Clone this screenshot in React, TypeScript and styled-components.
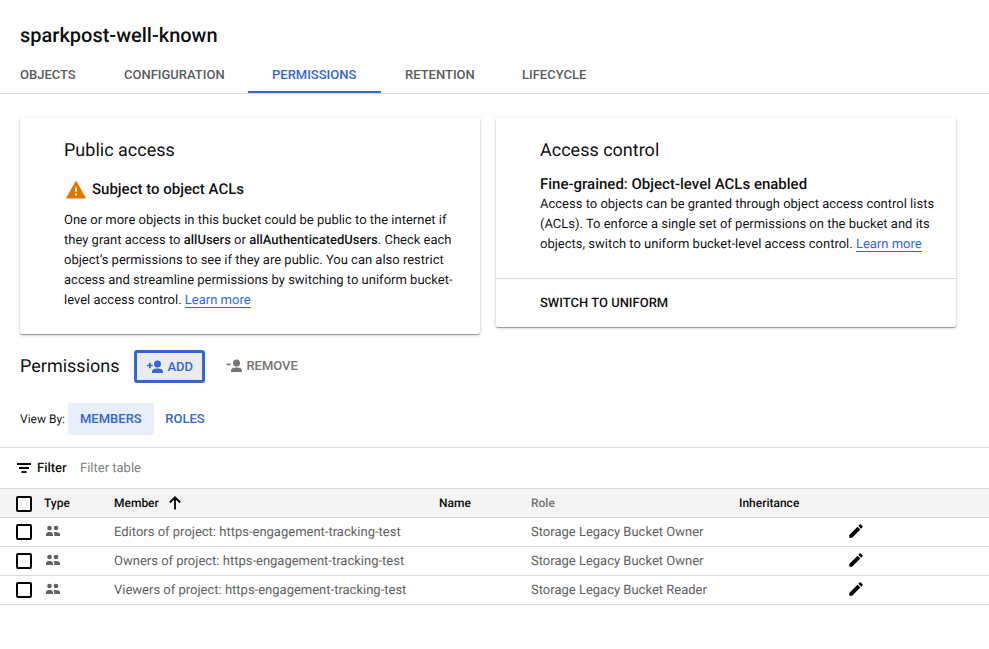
import React from 'react';
import styled, { createGlobalStyle } from 'styled-components';

const GlobalStyle = createGlobalStyle`
  * { box-sizing: border-box; }
  body {
    margin: 0;
    background: #fff;
    color: rgba(0, 0, 0, 0.95);
    font: 400 13px/20px Roboto, sans-serif;
    text-rendering: geometricPrecision;
  }
  h1, h2, h3, p { margin: 0; }
  button { border: 0; background: none; padding: 0; font: inherit; color: inherit; }
`;

const Page = styled.main`
  width: 989px;
  height: 649px;
  overflow: hidden;
`;

const Title = styled.h1`
  padding: 23px 20px 0;
  height: 57px;
  font-size: 20px;
  line-height: 24px;
  font-weight: 500;
`;

const Tabs = styled.nav`
  display: flex;
  height: 37px;
  padding-right: 20px;
  border-bottom: 1px solid #dadada;
`;

const Tab = styled.button<{ $active?: boolean; $width: number; $pad?: number }>`
  width: ${p => p.$width}px;
  height: 36px;
  padding: 2px 0 0 ${p => p.$pad ?? 24}px;
  border-bottom: 2px solid ${p => (p.$active ? '#3367d6' : 'transparent')};
  color: ${p => (p.$active ? '#3367d6' : '#5c5c5c')};
  font-weight: 500;
  text-align: left;
  white-space: nowrap;
`;

const Cards = styled.section`
  display: flex;
  align-items: flex-start;
  gap: 16px;
  padding: 24px 20px 0;
  height: 247px;
`;

const Card = styled.article<{ $height: number }>`
  display: flex;
  flex-direction: column;
  width: 460px;
  height: ${p => p.$height}px;
  border-radius: 2px;
  box-shadow: 0 1px 1px rgba(0, 0, 0, 0.36), 0 1px 4px rgba(0, 0, 0, 0.16);
`;

const CardBody = styled.div`
  flex: 1;
  padding: 21px 20px 0 44px;
`;

const CardTitle = styled.h2`
  font-size: 18px;
  line-height: 24px;
  font-weight: 400;
`;

const Status = styled.h3<{ $icon?: boolean }>`
  display: flex;
  align-items: center;
  gap: 4px;
  margin-top: ${p => (p.$icon ? 14 : 11)}px;
  height: ${p => (p.$icon ? 24 : 20)}px;
  margin-bottom: ${p => (p.$icon ? 10 : 1)}px;
  font-size: 15px;
  font-weight: 500;
`;

const Line = styled.span`
  display: block;
  white-space: nowrap;
`;

const Strong = styled.strong`
  font-weight: 500;
`;

const Link = styled.a`
  display: inline-block;
  height: 17px;
  line-height: 20px;
  color: #3367d6;
  border-bottom: 1px solid #3367d6;
  vertical-align: top;
`;

const CardFooter = styled.div`
  height: 49px;
  padding: 1px 44px 0;
  border-top: 1px solid #dadada;
  font-weight: 500;
  line-height: 47px;
`;

const PermissionBar = styled.section`
  display: flex;
  align-items: center;
  height: 50px;
  padding: 0 20px;
`;

const SectionTitle = styled.h2`
  width: 114px;
  padding-top: 2px;
  font-size: 18px;
  line-height: 24px;
  font-weight: 400;
`;

const Action = styled.button<{ $focused?: boolean }>`
  display: flex;
  align-items: center;
  gap: 3.4px;
  height: 33px;
  width: ${p => (p.$focused ? '71px' : 'auto')};
  margin-right: 21px;
  padding: ${p => (p.$focused ? '1px 0 0 10px' : '0')};
  border: ${p => (p.$focused ? '3px solid #3367d6' : '0')};
  border-radius: 3px;
  background: ${p => (p.$focused ? '#ebebeb' : 'transparent')};
  color: ${p => (p.$focused ? '#3367d6' : '#757575')};
  font-weight: 500;
`;

const ViewBar = styled.section`
  display: flex;
  align-items: center;
  height: 57px;
  padding: 0 20px 2px;
`;

const ViewLabel = styled.span`
  width: 48px;
  font-size: 12px;
  white-space: nowrap;
`;

const ViewOption = styled.button<{ $active?: boolean }>`
  height: 32px;
  padding: 0 12px;
  border-radius: 2px 0 0 2px;
  background: ${p => (p.$active ? '#e8eefa' : 'transparent')};
  color: #3367d6;
  font-weight: 500;

  & + & {
    padding-left: 11.600px;
  }
`;

const FilterBar = styled.div`
  display: flex;
  align-items: center;
  height: 41px;
  margin-top: -1px;
  padding-left: 17px;
  border-top: 1px solid #dadada;
`;

const FilterLabel = styled.span`
  width: 43px;
  margin-left: 6px;
  padding-top: 1px;
  font-weight: 500;
`;

const Placeholder = styled.span`
  padding-top: 1px;
  color: #808080;
`;

const Table = styled.div`
  border-top: 1px solid #dadada;
`;

const Row = styled.div<{ $header?: boolean }>`
  display: grid;
  grid-template-columns: 28px 70px 325px 92px 208px 1fr;
  align-items: center;
  height: 29px;
  padding-left: 16px;
  border-bottom: 1px solid #dadada;
  background: ${p => (p.$header ? '#f4f4f4' : '#fff')};
  color: ${p => (p.$header ? '#0d0d0d' : '#616161')};
  font-size: ${p => (p.$header ? 12 : 13)}px;
  font-weight: ${p => (p.$header ? 500 : 400)};
`;

const HeadCell = styled.span<{ $muted?: boolean }>`
  display: flex;
  align-items: center;
  gap: 10px;
  color: ${p => (p.$muted ? '#757575' : 'inherit')};
`;

const TextCell = styled.span`
  padding-top: 1px;
  white-space: nowrap;
`;

const Checkbox = styled.span<{ $low?: boolean }>`
  width: 16px;
  height: 16px;
  margin-top: ${p => (p.$low ? 2 : 0)}px;
  border: 2px solid #000;
  border-radius: 2px;
  background: #fff;
`;

const PencilCell = styled.span`
  padding: 0 0 2px 108px;
`;

const TypeCell = styled.span`
  padding-bottom: 2px;
`;

const Glyph = styled.svg`
  display: block;
  flex: none;
  fill: currentColor;
`;

const WarningGlyph = styled(Glyph)`
  margin-top: 2px;
  color: #e37400;
`;

const WarningIcon = () => (
  <WarningGlyph width="24" height="24" viewBox="0 0 24 24">
    <path d="M1.800 20.500h20.400L12 2.500zm11.200-3h-2v-2h2zm0-4h-2v-4h2z" />
  </WarningGlyph>
);

const PersonIcon = ({ sign }: { sign: 'plus' | 'minus' }) => (
  <Glyph width="17" height="14" viewBox="0 0 17 14">
    <circle cx="10.500" cy="3.900" r="3.500" />
    <path d="M5 13v-1.700C5 9.300 8.300 8.600 10.500 8.600S16 9.300 16 11.300V13z" />
    <path d={sign === 'plus' ? 'M2 2.700h1.700v2h2v1.600h-2v2H2v-2H0V4.700h2z' : 'M.6 4.500h4v1.700h-4z'} />
  </Glyph>
);

const FilterIcon = () => (
  <Glyph width="14" height="10" viewBox="0 0 14 10">
    <path d="M0 0h14v2H0zM2 4h10v2H2zM4.500 8h5v2h-5z" />
  </Glyph>
);

const ArrowIcon = () => (
  <Glyph width="12" height="14" viewBox="0 0 12 14">
    <path d="M6 13.500V1.500M.8 6.500 6 1.300l5.200 5.200" fill="none" stroke="#000" strokeWidth="1.800" />
  </Glyph>
);

const GroupIcon = () => (
  <Glyph width="18" height="12" viewBox="0 0 18 12">
    <circle cx="5.500" cy="3" r="2.300" />
    <circle cx="12" cy="3" r="2.300" />
    <path d="M2 11V9.300C2 7.500 4 7 5.500 7S9 7.500 9 9.300V11zM10.300 11V9.300c0-.9-.4-1.700-.9-2.200 3-.6 6.600.2 6.600 2.200V11z" />
  </Glyph>
);

const PencilIcon = () => (
  <Glyph width="18" height="18" viewBox="0 0 24 24" color="#000">
    <path d="M3 17.250V21h3.750L17.810 9.940l-3.750-3.750L3 17.250zM20.710 7.040c.39-.39.39-1.020 0-1.410l-2.340-2.340c-.39-.39-1.020-.39-1.410 0l-1.830 1.830 3.750 3.750 1.830-1.830z" />
  </Glyph>
);

const members = [
  { group: 'Editors', role: 'Storage Legacy Bucket Owner' },
  { group: 'Owners', role: 'Storage Legacy Bucket Owner' },
  { group: 'Viewers', role: 'Storage Legacy Bucket Reader' },
];

export default function App() {
  return (
    <Page>
      <GlobalStyle />
      <Title>sparkpost-well-known</Title>
      <Tabs>
        <Tab $width={100} $pad={20}>OBJECTS</Tab>
        <Tab $width={148}>CONFIGURATION</Tab>
        <Tab $width={133} $active>PERMISSIONS</Tab>
        <Tab $width={117}>RETENTION</Tab>
        <Tab $width={113}>LIFECYCLE</Tab>
      </Tabs>
      <Cards>
        <Card $height={216}>
          <CardBody>
            <CardTitle>Public access</CardTitle>
            <Status $icon><WarningIcon />Subject to object ACLs</Status>
            <p>
              <Line>One or more objects in this bucket could be public to the internet if</Line>
              <Line>they grant access to <Strong>allUsers</Strong> or <Strong>allAuthenticatedUsers</Strong>. Check each</Line>
              <Line>object’s permissions to see if they are public. You can also restrict</Line>
              <Line>access and streamline permissions by switching to uniform bucket-</Line>
              <Line>level access control. <Link>Learn more</Link></Line>
            </p>
          </CardBody>
        </Card>
        <Card $height={209}>
          <CardBody>
            <CardTitle>Access control</CardTitle>
            <Status>Fine-grained: Object-level ACLs enabled</Status>
            <p>
              <Line>Access to objects can be granted through object access control lists</Line>
              <Line>(ACLs). To enforce a single set of permissions on the bucket and its</Line>
              <Line>objects, switch to uniform bucket-level access control. <Link>Learn more</Link></Line>
            </p>
          </CardBody>
          <CardFooter>SWITCH TO UNIFORM</CardFooter>
        </Card>
      </Cards>
      <PermissionBar>
        <SectionTitle>Permissions</SectionTitle>
        <Action $focused><PersonIcon sign="plus" />ADD</Action>
        <Action><PersonIcon sign="minus" />REMOVE</Action>
      </PermissionBar>
      <ViewBar>
        <ViewLabel>View By:</ViewLabel>
        <ViewOption $active>MEMBERS</ViewOption>
        <ViewOption>ROLES</ViewOption>
      </ViewBar>
      <FilterBar>
        <FilterIcon />
        <FilterLabel>Filter</FilterLabel>
        <Placeholder>Filter table</Placeholder>
      </FilterBar>
      <Table>
        <Row $header>
          <Checkbox $low />
          <HeadCell>Type</HeadCell>
          <HeadCell>Member <ArrowIcon /></HeadCell>
          <HeadCell>Name</HeadCell>
          <HeadCell $muted>Role</HeadCell>
          <HeadCell>Inheritance</HeadCell>
        </Row>
        {members.map(({ group, role }) => (
          <Row key={group}>
            <Checkbox />
            <TypeCell><GroupIcon /></TypeCell>
            <TextCell>{group} of project: https-engagement-tracking-test</TextCell>
            <span />
            <TextCell>{role}</TextCell>
            <PencilCell><PencilIcon /></PencilCell>
          </Row>
        ))}
      </Table>
    </Page>
  );
}
